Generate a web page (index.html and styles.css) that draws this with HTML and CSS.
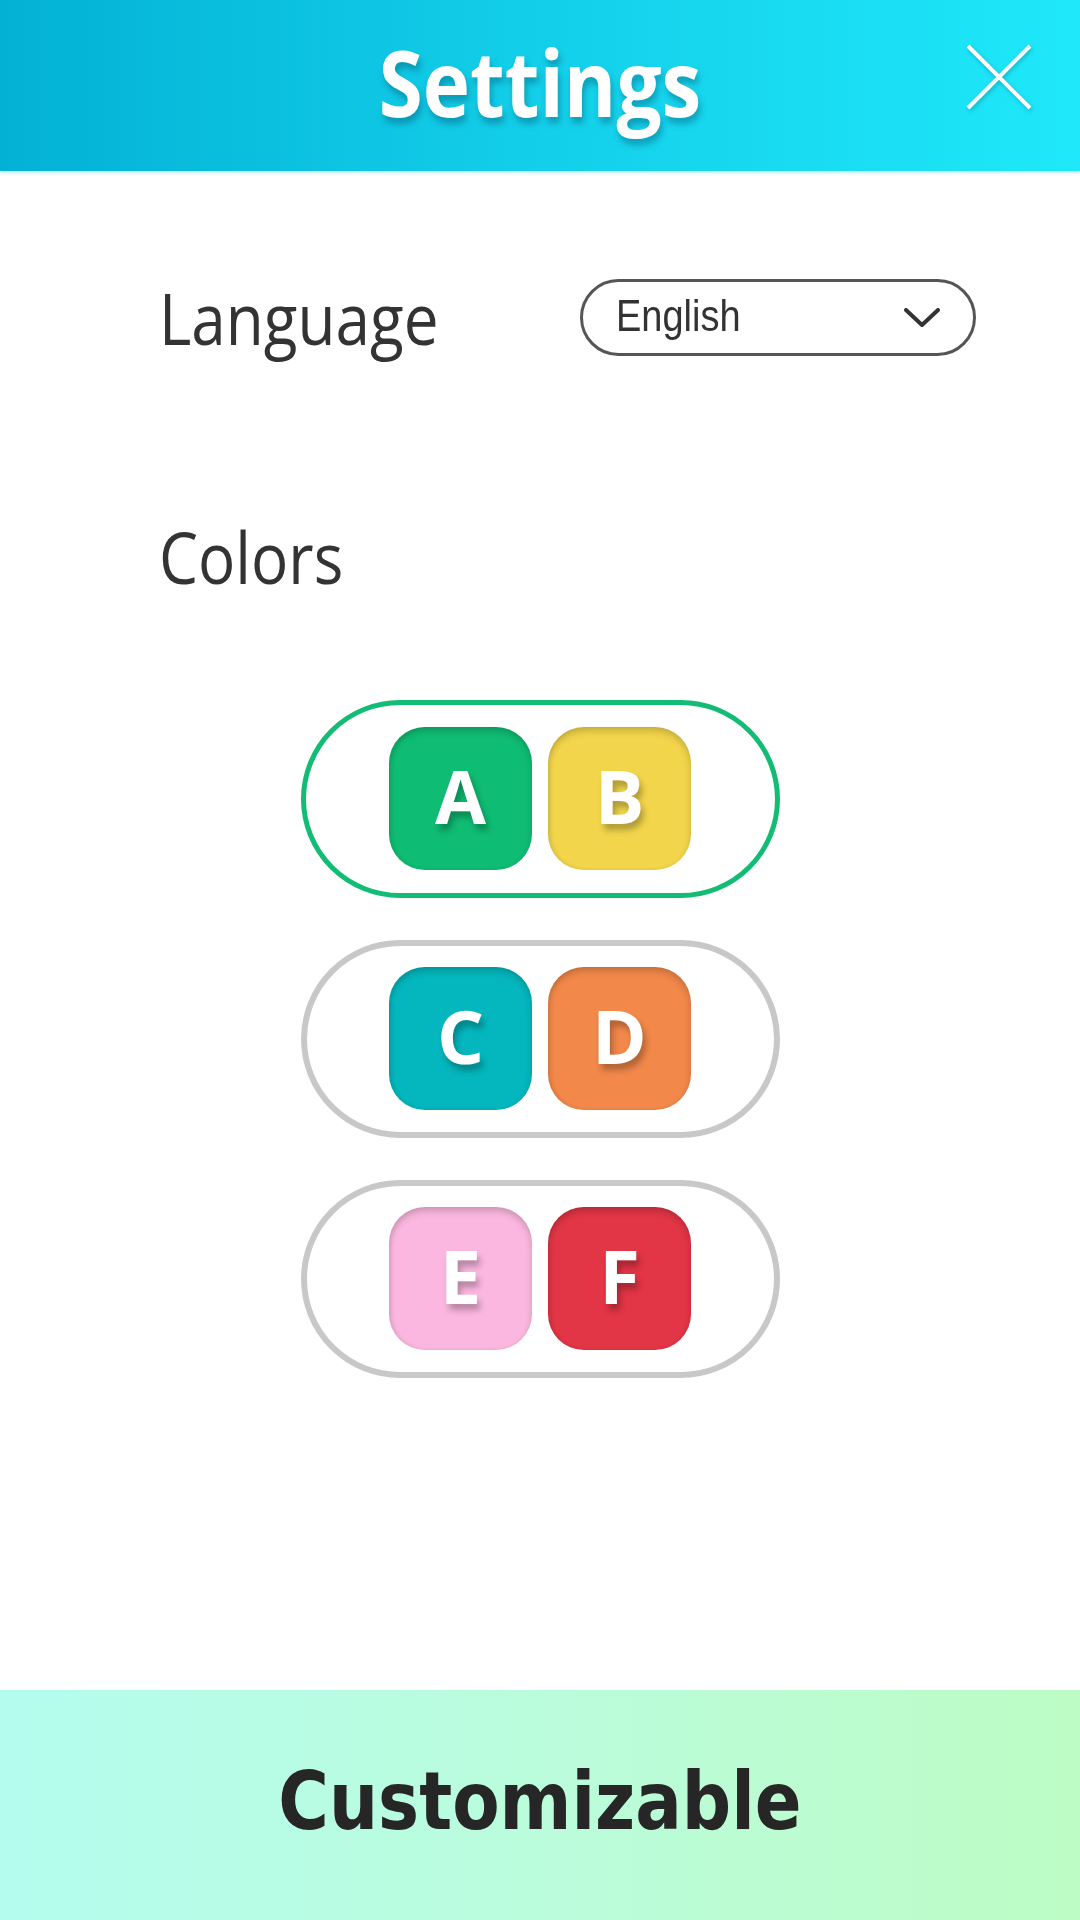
FILE: index.html
```html
<!DOCTYPE html>
<html lang="en">
<head>
<meta charset="utf-8">
<title>Settings</title>
<link rel="stylesheet" href="styles.css">
</head>
<body>
<div class="screen">
  <header class="topbar">
    <h1 class="title"><span class="stretch">Settings</span></h1>
    <button class="close" aria-label="Close">
      <svg width="66" height="66" viewBox="0 0 66 66">
        <line x1="2" y1="2" x2="64" y2="64" stroke="#ffffff" stroke-width="4"/>
        <line x1="64" y1="2" x2="2" y2="64" stroke="#ffffff" stroke-width="4"/>
      </svg>
    </button>
  </header>

  <main class="content">
    <div class="row">
      <div class="label"><span class="stretch">Language</span></div>
      <div class="select">
        <span class="select-text">English</span>
        <svg class="chevron" width="36" height="20" viewBox="0 0 36 20">
          <polyline points="2,2 18,17 34,2" fill="none" stroke="#333333" stroke-width="4" stroke-linejoin="round" stroke-linecap="round"/>
        </svg>
      </div>
    </div>

    <div class="label colors-label"><span class="stretch">Colors</span></div>

    <div class="pills">
      <div class="pill selected">
        <div class="tile green"><span>A</span></div>
        <div class="tile yellow"><span>B</span></div>
      </div>
      <div class="pill">
        <div class="tile teal"><span>C</span></div>
        <div class="tile orange"><span>D</span></div>
      </div>
      <div class="pill">
        <div class="tile pink"><span>E</span></div>
        <div class="tile red"><span>F</span></div>
      </div>
    </div>
  </main>

  <footer class="banner">
    <span class="banner-text">Customizable</span>
  </footer>
</div>
</body>
</html>
```
FILE: styles.css
```css
* { box-sizing: border-box; }

html, body {
  margin: 0;
  padding: 0;
  background: #ffffff;
}

.screen {
  width: 1080px;
  height: 1920px;
  display: flex;
  flex-direction: column;
  overflow: hidden;
}

.topbar {
  height: 171px;
  flex: 0 0 171px;
  background: linear-gradient(90deg, #03b1d5 0%, #13cfe9 50%, #1fe8fa 100%);
  box-shadow: 0 2px 3px rgba(0, 170, 210, 0.25);
  display: flex;
  align-items: center;
  justify-content: center;
  position: relative;
}

.title {
  margin: 0;
  font-family: "Open Sans", "Noto Sans", sans-serif;
  font-weight: 700;
  font-size: 80px;
  line-height: 100px;
  color: #ffffff;
  text-shadow: 2px 5px 6px rgba(0, 60, 90, 0.35);
  position: relative;
  top: -4px;
}

.stretch {
  display: inline-block;
  transform: scaleY(1.14);
}

.close {
  position: absolute;
  right: 48px;
  top: 44px;
  width: 66px;
  height: 66px;
  padding: 0;
  border: 0;
  background: transparent;
  display: block;
  filter: drop-shadow(1px 2px 2px rgba(0, 60, 90, 0.3));
}

.close svg { display: block; }

.content {
  flex: 1 1 auto;
  display: flex;
  flex-direction: column;
}

.row {
  margin-top: 108px;
  height: 77px;
  display: flex;
  align-items: center;
  padding-left: 159px;
}

.label {
  font-family: "Open Sans", "Noto Sans", sans-serif;
  font-weight: 400;
  font-size: 62px;
  line-height: 80px;
  height: 80px;
  color: #333333;
}

.row .label {
  width: 421px;
  flex: 0 0 421px;
}

.select {
  width: 396px;
  height: 77px;
  border: 3px solid #555555;
  border-radius: 40px;
  display: flex;
  align-items: center;
  justify-content: space-between;
  padding: 0 33px 0 33px;
}

.select-text {
  display: inline-block;
  font-family: "Liberation Sans", Arial, sans-serif;
  font-size: 38px;
  color: #333333;
  transform: scaleY(1.15);
  position: relative;
  top: -1px;
}

.chevron { display: block; }

.colors-label {
  margin-top: 161px;
  padding-left: 159px;
}

.pills {
  margin-top: 103px;
  display: flex;
  flex-direction: column;
  align-items: center;
  gap: 42px;
}

.pill {
  width: 479px;
  height: 198px;
  border: 6px solid #c8c8c8;
  border-radius: 99px;
  display: flex;
  align-items: center;
  justify-content: center;
  gap: 16px;
  padding-bottom: 2px;
}

.pill.selected {
  border: 5px solid #12bc74;
}

.tile {
  width: 143px;
  height: 143px;
  border-radius: 36px;
  display: flex;
  align-items: center;
  justify-content: center;
  box-shadow: inset 0 4px 7px rgba(0, 0, 0, 0.18), inset 2px 0 4px rgba(0, 0, 0, 0.06);
}

.tile span {
  font-family: "Open Sans", "Noto Sans", sans-serif;
  font-weight: 700;
  font-size: 74px;
  line-height: 1;
  color: #ffffff;
  text-shadow: 3px 6px 6px rgba(0, 0, 0, 0.28);
  position: relative;
  top: -2px;
}

.green  { background: #0fbc73; }
.yellow { background: #f2d54b; }
.teal   { background: #04b6bd; }
.orange { background: #f2884a; }
.pink   { background: #fbb7df; }
.red    { background: #e23545; }

.banner {
  height: 230px;
  flex: 0 0 230px;
  background: linear-gradient(90deg, #b4fcee 0%, #bafcdc 50%, #bdfcc5 100%);
  display: flex;
  align-items: center;
  justify-content: center;
}

.banner-text {
  display: inline-block;
  font-family: "DejaVu Sans", Verdana, sans-serif;
  font-weight: 700;
  font-size: 69px;
  color: #262626;
  transform: scaleY(1.17);
  position: relative;
  top: -4px;
}
```
